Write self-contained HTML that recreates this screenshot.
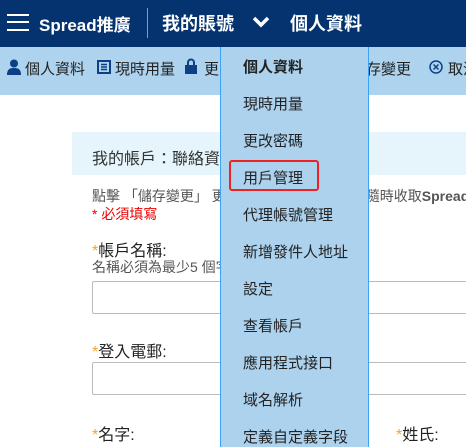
<!DOCTYPE html>
<html><head><meta charset="utf-8"><style>
*{margin:0;padding:0;box-sizing:border-box}
body{width:466px;height:443px;overflow:hidden;position:relative;background:#fff;font-family:"Liberation Sans","Noto Sans CJK TC",sans-serif;color:#333}
.a{position:absolute;white-space:nowrap}
#hd{position:absolute;left:0;top:0;width:466px;height:47px;background:#04336f;color:#fff}
#tb{position:absolute;left:0;top:47px;width:466px;height:48px;background:#add3ef}
#dd{position:absolute;left:220px;top:47px;width:149px;height:400px;background:#acd2ee;border-left:1px solid #3da3f2;border-right:1px solid #3da3f2}
#dd div{position:absolute;left:22px;font-size:15px;color:#222;white-space:nowrap}
.inp{position:absolute;left:92px;width:380px;height:33px;border:1px solid #bbb;border-radius:2px}
.st{color:#f5a623}
</style></head><body>
<div id="hd">
 <div class="a" style="left:7px;top:14px;width:22px;height:2px;background:#fff"></div>
 <div class="a" style="left:7px;top:21px;width:22px;height:2px;background:#fff"></div>
 <div class="a" style="left:7px;top:29px;width:22px;height:2px;background:#fff"></div>
 <div class="a" style="left:39px;top:11px;font-size:17px;font-weight:bold">Spread推廣</div>
 <div class="a" style="left:147px;top:8px;width:1px;height:30px;background:#8899b8"></div>
 <div class="a" style="left:162px;top:10px;font-size:18px;font-weight:bold">我的賬號</div>
 <svg class="a" style="left:252px;top:15px" width="18" height="14" viewBox="0 0 18 14"><path d="M2 3l7 7 7-7" stroke="#fff" stroke-width="3.5" fill="none"/></svg>
 <div class="a" style="left:290px;top:10px;font-size:18px;font-weight:bold">個人資料</div>
</div>
<div id="tb">
 <svg class="a" style="left:7px;top:12px" width="14" height="16" viewBox="0 0 14 16"><circle cx="7" cy="4.5" r="4" fill="#0d3f86"/><path d="M0 16c0-6 3-7 7-7s7 1 7 7z" fill="#0d3f86"/></svg>
 <div class="a" style="left:25px;top:11px;font-size:15px;color:#222">個人資料</div>
 <svg class="a" style="left:97px;top:13px" width="14" height="14" viewBox="0 0 14 14"><rect x="1" y="1" width="12" height="12" fill="none" stroke="#0d3f86" stroke-width="2"/><path d="M4 4.5h6M4 7h6M4 9.5h6" stroke="#0d3f86" stroke-width="1.5"/></svg>
 <div class="a" style="left:115px;top:11px;font-size:15px;color:#222">現時用量</div>
 <svg class="a" style="left:185px;top:11px" width="12" height="16" viewBox="0 0 12 16"><path d="M3 7V4.5a3 3 0 0 1 6 0V7" stroke="#0d3f86" stroke-width="2" fill="none"/><rect x="0" y="7" width="12" height="9" fill="#0d3f86"/></svg>
 <div class="a" style="left:204px;top:11px;font-size:15px;color:#222">更</div>
 <div class="a" style="left:366px;top:11px;font-size:15px;color:#222">存變更</div>
 <svg class="a" style="left:429px;top:13px" width="14" height="14" viewBox="0 0 14 14"><circle cx="7" cy="7" r="6" fill="none" stroke="#0d3f86" stroke-width="1.5"/><path d="M4.5 4.5l5 5M9.5 4.5l-5 5" stroke="#0d3f86" stroke-width="1.5"/></svg>
 <div class="a" style="left:448px;top:11px;font-size:15px;color:#222">取消</div>
</div>
<div class="a" style="left:72px;top:132px;width:394px;height:43px;background:#e5f5fb"></div>
<div class="a" style="left:92px;top:145px;font-size:16px;color:#333">我的帳戶：聯絡資料</div>
<div class="a" style="left:92px;top:186px;font-size:14px;color:#555">點擊 「儲存變更」 更新您的聯絡資料，以便隨時收取<b>Spread</b></div>
<div class="a" style="left:92px;top:204px;font-size:14px;color:#e00">* 必須填寫</div>
<div class="a" style="left:92px;top:237px;font-size:16px;color:#222"><span class="st">*</span>帳戶名稱:</div>
<div class="a" style="left:92px;top:257px;font-size:14px;color:#555">名稱必須為最少5 個字元</div>
<div class="inp" style="top:281px"></div>
<div class="a" style="left:92px;top:338px;font-size:16px;color:#222"><span class="st">*</span>登入電郵:</div>
<div class="inp" style="top:362px"></div>
<div class="a" style="left:92px;top:421px;font-size:16px;color:#222"><span class="st">*</span>名字:</div>
<div class="a" style="left:396px;top:421px;font-size:16px;color:#222"><span class="st">*</span>姓氏:</div>
<div id="dd">
 <div style="top:9px;font-weight:bold">個人資料</div>
 <div style="top:46px">現時用量</div>
 <div style="top:83px">更改密碼</div>
 <div style="top:120px">用戶管理</div>
 <div style="top:157px">代理帳號管理</div>
 <div style="top:194px">新增發件人地址</div>
 <div style="top:231px">設定</div>
 <div style="top:268px">查看帳戶</div>
 <div style="top:305px">應用程式接口</div>
 <div style="top:342px">域名解析</div>
 <div style="top:379px">定義自定義字段</div>
</div>
<div class="a" style="left:229px;top:160px;width:90px;height:31px;border:2px solid #ee2222;border-radius:3px"></div>
</body></html>
